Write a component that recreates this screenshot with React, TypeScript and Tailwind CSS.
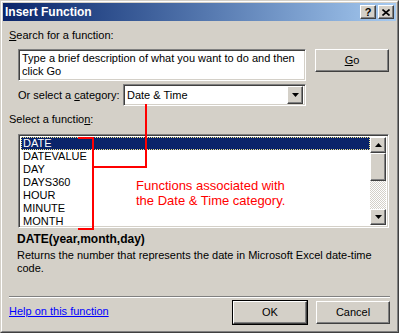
import React from "react";

const FUNCS = ["DATE", "DATEVALUE", "DAY", "DAYS360", "HOUR", "MINUTE", "MONTH"];

// classic raised 3D button edge
const raised =
  "border border-t-white border-l-white border-r-[#404040] border-b-[#404040] shadow-[inset_-1px_-1px_0_#808080,inset_1px_1px_0_#d4d0c8]";
const sunken =
  "border border-t-[#808080] border-l-[#808080] border-r-white border-b-white shadow-[inset_1px_1px_0_#404040,inset_-1px_-1px_0_#d4d0c8]";

function Arrow({ up }: { up?: boolean }) {
  return (
    <svg width="7" height="4" viewBox="0 0 7 4">
      <path d={up ? "M3.5 0 L7 4 L0 4 Z" : "M0 0 L7 0 L3.5 4 Z"} fill="#000" />
    </svg>
  );
}

function ScrollBtn({ up }: { up?: boolean }) {
  return (
    <div className={`h-[16px] w-[16px] bg-[#d4d0c8] flex items-center justify-center ${raised}`}>
      <Arrow up={up} />
    </div>
  );
}

export default function App() {
  return (
    <div className="relative w-[399px] h-[333px] bg-[#d4d0c8] border border-t-[#d4d0c8] border-l-[#d4d0c8] border-r-[#404040] border-b-[#404040] font-['Liberation_Sans',Arial,sans-serif] text-[11px] leading-[13px] text-black overflow-hidden">
      <div className="h-full border border-t-white border-l-white border-r-[#808080] border-b-[#808080] p-px flex flex-col">
        {/* title bar */}
        <div className="h-[18px] flex items-center bg-gradient-to-r from-[#0a246a] to-[#a6caf0] pl-[2px] pr-[2px]">
          <span className="text-white font-bold text-[12px] leading-[14px]">Insert Function</span>
          <div className="ml-auto flex gap-[2px]">
            <div className={`w-[16px] h-[14px] bg-[#d4d0c8] flex items-center justify-center font-bold text-[11px] leading-none ${raised}`}>?</div>
            <div className={`w-[16px] h-[14px] bg-[#d4d0c8] flex items-center justify-center ${raised}`}>
              <svg width="8" height="7" viewBox="0 0 8 7">
                <path d="M0.5 0.5 L7.5 6.5 M7.5 0.5 L0.5 6.5" stroke="#000" strokeWidth="1.6" />
              </svg>
            </div>
          </div>
        </div>

        {/* body */}
        <div className="flex flex-col px-[6px]">
          <div className="mt-[8px]">
            <u>S</u>earch for a function:
          </div>

          <div className="mt-[7px] flex items-start">
            <div className={`ml-[9px] w-[288px] h-[32px] bg-white px-[3px] pt-[2px] ${sunken}`}>
              Type a brief description of what you want to do and then click Go
            </div>
            <button className={`ml-[9px] w-[74px] h-[23px] bg-[#d4d0c8] ${raised}`}>
              <u>G</u>o
            </button>
          </div>

          <div className="mt-[3px] flex items-center">
            <span className="ml-[9px] w-[105px]">
              Or select a <u>c</u>ategory:
            </span>
            <div className={`w-[183px] h-[22px] bg-white flex items-center pl-[3px] pr-[2px] ${sunken}`}>
              <span className="flex-1">Date &amp; Time</span>
              <div className={`w-[16px] h-[18px] bg-[#d4d0c8] flex items-center justify-center ${raised}`}>
                <Arrow />
              </div>
            </div>
          </div>

          <div className="mt-[7px]">
            Select a functio<u>n</u>:
          </div>

          <div className={`mt-[8px] ml-[9px] w-[371px] h-[94px] bg-white flex p-[2px] ${sunken}`}>
            <div className="flex-1 flex flex-col">
              {FUNCS.map((f, i) => (
                <div
                  key={f}
                  className={`h-[13px] pl-[2px] ${
                    i === 0 ? "bg-[#0a246a] text-white outline outline-1 outline-dotted outline-[#f0e68c] -outline-offset-1" : ""
                  }`}
                >
                  {f}
                </div>
              ))}
            </div>
            <div className="w-[16px] flex flex-col">
              <ScrollBtn up />
              <div className={`h-[28px] bg-[#d4d0c8] ${raised}`} />
              <div className="flex-1 bg-[repeating-conic-gradient(#d4d0c8_0%_25%,#ffffff_0%_50%)] bg-[length:2px_2px]" />
              <ScrollBtn />
            </div>
          </div>

          <div className="mt-[4px] ml-[8px] font-bold text-[12px] leading-[14px]">DATE(year,month,day)</div>
          <div className="mt-[3px] ml-[8px] whitespace-nowrap">
            Returns the number that represents the date in Microsoft Excel date-time
            <br />
            code.
          </div>

          <div className="mt-[21px] h-[2px] border-t border-t-[#808080] border-b border-b-white" />

          <div className="mt-[3px] flex items-center">
            <span className="text-[#0000ff] underline -mt-[2px]">Help on this function</span>
            <button className={`ml-auto w-[74px] h-[23px] bg-[#d4d0c8] outline outline-1 outline-black ${raised}`}>OK</button>
            <button className={`ml-[9px] w-[74px] h-[23px] bg-[#d4d0c8] ${raised}`}>Cancel</button>
          </div>
        </div>
      </div>

      {/* red annotation */}
      <div className="absolute left-[77px] top-[136px] w-[16px] h-[2px] bg-[#ff0000]" />
      <div className="absolute left-[91px] top-[136px] w-[2px] h-[93px] bg-[#ff0000]" />
      <div className="absolute left-[77px] top-[227px] w-[16px] h-[2px] bg-[#ff0000]" />
      <div className="absolute left-[144px] top-[103px] w-[2px] h-[64px] bg-[#ff0000]" />
      <div className="absolute left-[91px] top-[165px] w-[55px] h-[2px] bg-[#ff0000]" />
      <div className="absolute left-[135px] top-[177px] text-[#ff0000] text-[13px] leading-[15px]">
        Functions associated with
        <br />
        the Date &amp; Time category.
      </div>
    </div>
  );
}
